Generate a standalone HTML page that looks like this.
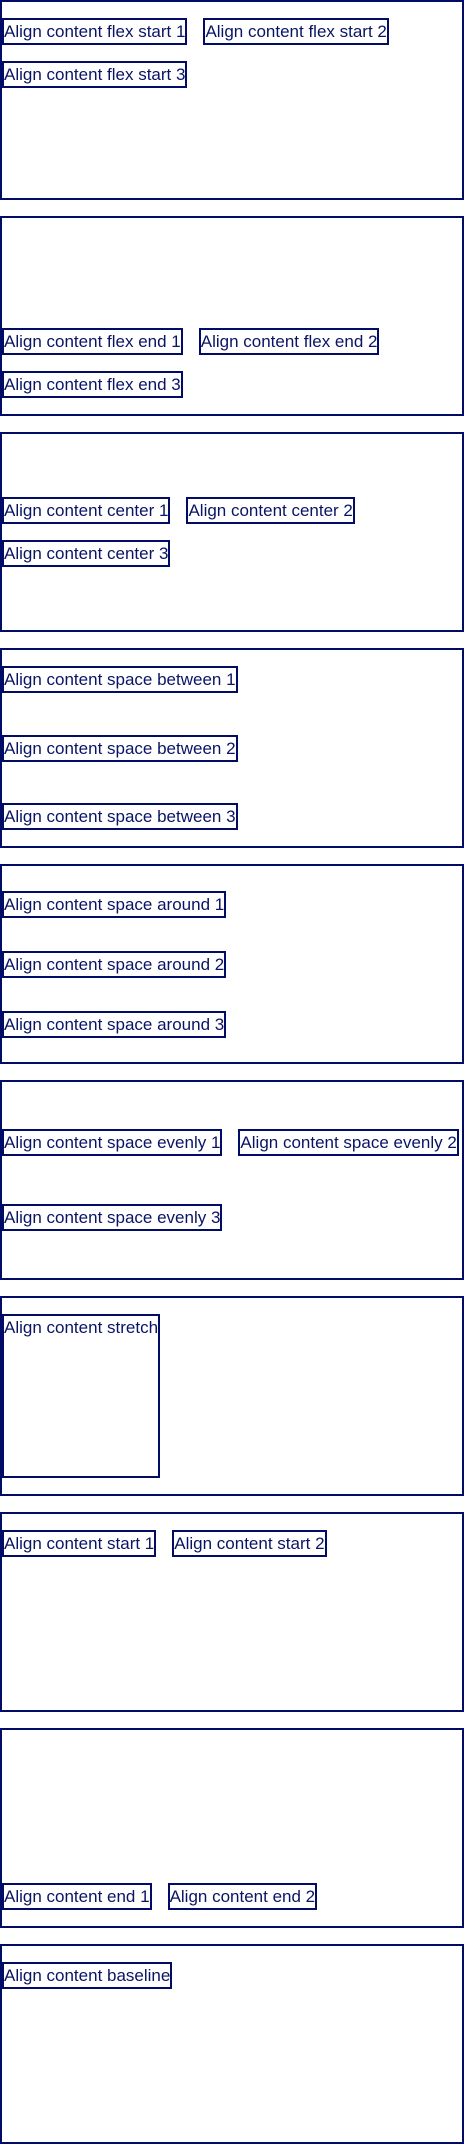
<!DOCTYPE html>
<html><head><meta charset="utf-8"><style>
html,body{margin:0;padding:0;background:#fff;}
body{width:464px;height:2144px;overflow:hidden;font-family:"Liberation Sans",sans-serif;}
.c{box-sizing:border-box;width:464px;height:200px;border:2px solid #000c66;padding:16px 0;margin-bottom:16px;display:flex;flex-wrap:wrap;gap:16px;}
.c div{border:2px solid #000c66;color:#0a1466;font-size:17px;line-height:23px;padding:0;white-space:nowrap;}
.ar div{margin-right:20px;}
</style></head><body>
<div class="c" style="align-content:flex-start"><div>Align content flex start 1</div><div>Align content flex start 2</div><div>Align content flex start 3</div></div>
<div class="c" style="align-content:flex-end"><div>Align content flex end 1</div><div>Align content flex end 2</div><div>Align content flex end 3</div></div>
<div class="c" style="align-content:center"><div>Align content center 1</div><div>Align content center 2</div><div>Align content center 3</div></div>
<div class="c" style="align-content:space-between"><div>Align content space between 1</div><div>Align content space between 2</div><div>Align content space between 3</div></div>
<div class="c ar" style="align-content:space-around"><div>Align content space around 1</div><div>Align content space around 2</div><div>Align content space around 3</div></div>
<div class="c" style="align-content:space-evenly"><div>Align content space evenly 1</div><div>Align content space evenly 2</div><div>Align content space evenly 3</div></div>
<div class="c" style="align-content:stretch"><div>Align content stretch</div></div>
<div class="c" style="align-content:start"><div>Align content start 1</div><div>Align content start 2</div></div>
<div class="c" style="align-content:end"><div>Align content end 1</div><div>Align content end 2</div></div>
<div class="c" style="align-content:baseline;margin-bottom:0"><div>Align content baseline</div></div>
</body></html>
